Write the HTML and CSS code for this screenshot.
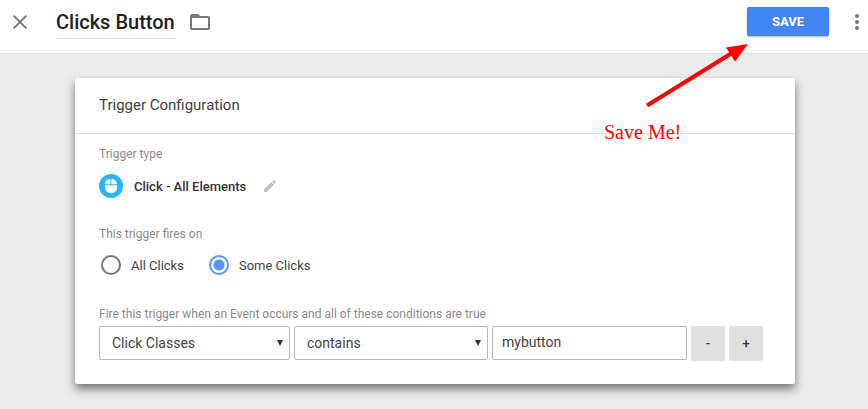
FILE: index.html
```html
<!DOCTYPE html>
<html lang="en">
<head>
    <meta charset="UTF-8">
    <meta name="viewport" content="width=device-width, initial-scale=1.0">
    <title>Clicks Button</title>
    <link rel="stylesheet" href="styles.css">
</head>
<body>
    <header class="toolbar">
        <button type="button" class="icon-btn close-btn" aria-label="Close">
            <svg width="14" height="14" viewBox="0 0 14 14"><path d="M0.6 0.6l12.8 12.8M13.4 0.6L0.6 13.4" fill="none" stroke="#757575" stroke-width="1.8"/></svg>
        </button>
        <h1 class="title">Clicks Button</h1>
        <button type="button" class="icon-btn folder-btn" aria-label="Folder">
            <svg width="20" height="16" viewBox="0 0 20 16"><path d="M8 0H2C.9 0 0 .9 0 2v12c0 1.100.9 2 2 2h16c1.100 0 2-.9 2-2V4c0-1.100-.9-2-2-2h-8L8 0zM2 4h16v10H2z" fill="#757575" fill-rule="evenodd"/></svg>
        </button>
        <button type="submit" form="trigger-form" class="save-btn">SAVE</button>
        <button type="button" class="icon-btn" aria-label="More">
            <svg width="4" height="16" viewBox="0 0 4 16" fill="#757575"><circle cx="2" cy="2" r="2"/><circle cx="2" cy="8" r="2"/><circle cx="2" cy="14" r="2"/></svg>
        </button>
    </header>

    <main class="card">
        <h2 class="card-title">Trigger Configuration</h2>
        <form id="trigger-form" class="card-body">
            <div class="label">Trigger type</div>
            <div class="trigger-type">
                <svg width="24" height="24" viewBox="0 0 24 24">
                    <circle cx="12" cy="12" r="12" fill="#29b6f6"/>
                    <path d="M11.500 5v5.300H6C6 7.300 8 5 11.500 5zM12.500 5c3.500 0 5.500 2.300 5.500 5.300h-5.500zM6 11.200h12V13c0 4-2.400 6.200-6 6.200s-6-2.200-6-6.200z" fill="#fff"/>
                </svg>
                <span class="type-name">Click - All Elements</span>
                <button type="button" class="icon-btn" aria-label="Edit">
                    <svg width="12" height="12" viewBox="3 3 18 18"><path d="M3 17.250V21h3.750L17.810 9.940l-3.750-3.750L3 17.250zM20.710 7.040c.39-.39.39-1.020 0-1.410l-2.340-2.340c-.39-.39-1.020-.39-1.410 0l-1.830 1.830 3.750 3.750 1.830-1.830z" fill="#bdbdbd"/></svg>
                </button>
            </div>

            <div class="label">This trigger fires on</div>
            <div class="radio-group">
                <label class="radio"><input type="radio" name="fires" value="all">All Clicks</label>
                <label class="radio"><input type="radio" name="fires" value="some" checked>Some Clicks</label>
            </div>

            <div class="label">Fire this trigger when an Event occurs and all of these conditions are true</div>
            <div class="conditions">
                <div class="select-wrap">
                    <select aria-label="Variable"><option>Click Classes</option></select>
                </div>
                <div class="select-wrap">
                    <select aria-label="Operator"><option>contains</option></select>
                </div>
                <input type="text" aria-label="Value" value="mybutton">
                <button type="button" class="row-btn" aria-label="Remove condition">-</button>
                <button type="button" class="row-btn" aria-label="Add condition">+</button>
            </div>
        </form>
    </main>

    <div class="callout">
        <svg width="104" height="66" viewBox="0 0 104 66"><path d="M3 61.500L88 9" stroke="#f00" stroke-width="4"/><path d="M104 0L82 3.500 91 17.500z" fill="#f00"/></svg>
        <span class="callout-text">Save Me!</span>
    </div>
</body>
</html>
```

FILE: styles.css
```css
* {
    box-sizing: border-box;
}

body {
    margin: 0;
    background-color: #ececec;
    color: #424242;
    font-family: Roboto, sans-serif;
    font-size: 13px;
}

button, input, select {
    font-family: inherit;
}

svg {
    display: block;
}

/* Header bar */
.toolbar {
    display: flex;
    align-items: center;
    height: 54px;
    padding: 0 9px 10px 13px;
    background-color: #fff;
    border-bottom: 1px solid #e0e0e0;
}

.icon-btn {
    padding: 0;
    border: none;
    background: none;
    cursor: pointer;
}

.close-btn {
    margin-right: 29px;
}

.title {
    margin: 0;
    padding: 6px 0 4px;
    border-bottom: 1px solid #dadada;
    color: #212121;
    font-size: 20px;
    font-weight: 500;
    line-height: 24px;
}

.folder-btn {
    margin-left: 15px;
}

.save-btn {
    width: 82px;
    height: 29px;
    margin-left: auto;
    margin-right: 26px;
    border: none;
    border-radius: 2px;
    background-color: #4285f4;
    box-shadow: 0 1px 2px rgba(0,0,0,0.3);
    color: #fff;
    font-size: 13px;
    font-weight: 700;
    cursor: pointer;
}

/* Trigger card */
.card {
    margin: 24px 73px 24px 75px;
    border-radius: 2px;
    background-color: #fff;
    box-shadow: 0 5px 10px rgba(0,0,0,0.5);
}

.card-title {
    margin: 0;
    padding: 15px 24px 16px;
    border-bottom: 1px solid #dedede;
    font-size: 15px;
    font-weight: 400;
    line-height: 24px;
}

.card-body {
    padding: 12px 32px 24px 24px;
}

.label {
    color: #8a8a8a;
    font-size: 12px;
    line-height: 16px;
}

.trigger-type {
    display: flex;
    align-items: center;
    margin: 12px 0 28px;
}

.type-name {
    margin: 0 18px 0 11px;
    color: #333;
    font-weight: 500;
}

.radio-group {
    display: flex;
    gap: 25px;
    margin: 13px 0 31px 2px;
}

.radio {
    display: flex;
    align-items: center;
    gap: 10px;
    height: 20px;
}

.radio input {
    appearance: none;
    width: 20px;
    height: 20px;
    margin: 0;
    border: 2px solid #757575;
    border-radius: 50%;
}

.radio input:checked {
    border-color: #5694f8;
    background: radial-gradient(circle, #5694f8 5px, transparent 6px);
}

/* Condition row */
.conditions {
    display: grid;
    grid-template-columns: 191fr 194fr 195fr 34px 34px;
    gap: 4px;
    margin-top: 4px;
}

.select-wrap {
    position: relative;
}

.select-wrap::after {
    content: "";
    position: absolute;
    top: 14px;
    right: 7px;
    border: 3px solid transparent;
    border-top: 6px solid #333;
    border-bottom: none;
    pointer-events: none;
}

.conditions select,
.conditions input {
    appearance: none;
    width: 100%;
    height: 34px;
    border: 1px solid #b8b8b8;
    border-radius: 2px;
    background-color: #fff;
    color: #424242;
    font-size: 14px;
}

.conditions select {
    padding: 0 12px;
}

.conditions input {
    padding: 0 9px 2px;
}

.row-btn {
    height: 34px;
    padding: 0;
    border: none;
    border-radius: 2px;
    background-color: #e0e0e0;
    box-shadow: 0 1px 1px rgba(0,0,0,0.12);
    color: #333;
    font-size: 13px;
    font-weight: 500;
    cursor: pointer;
}

/* Red note pointing at the save button */
.callout {
    position: absolute;
    top: 44px;
    right: 120px;
    width: 144px;
    color: #f00;
    pointer-events: none;
}

.callout svg {
    margin-left: auto;
}

.callout-text {
    display: block;
    margin-top: 10px;
    font-family: "Liberation Serif", serif;
    font-size: 20px;
    line-height: 24px;
}
```
